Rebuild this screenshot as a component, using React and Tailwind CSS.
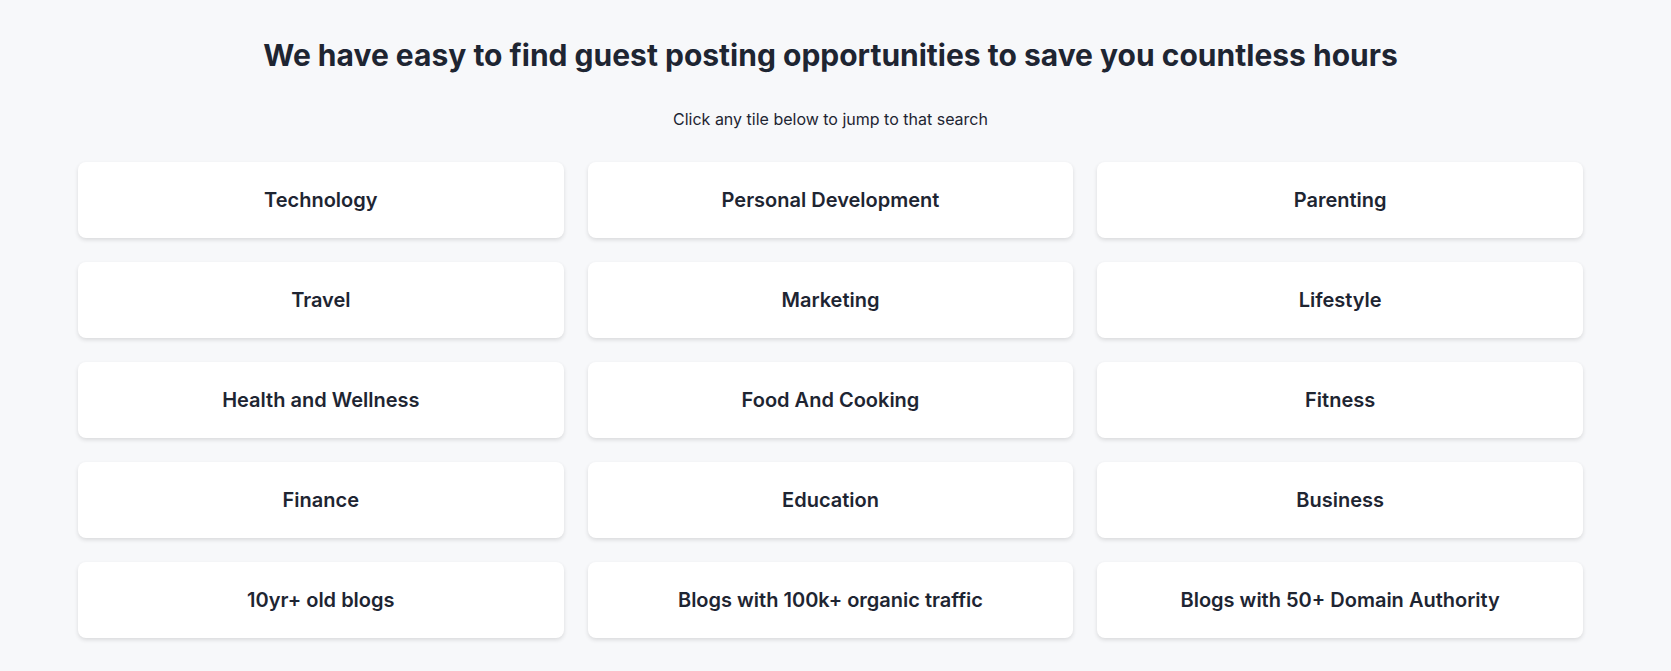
import React from "react";

const tiles = [
  "Technology",
  "Personal Development",
  "Parenting",
  "Travel",
  "Marketing",
  "Lifestyle",
  "Health and Wellness",
  "Food And Cooking",
  "Fitness",
  "Finance",
  "Education",
  "Business",
  "10yr+ old blogs",
  "Blogs with 100k+ organic traffic",
  "Blogs with 50+ Domain Authority",
];

function App() {
  return (
    <div
      className="min-h-screen w-full bg-[#f7f8fa] text-[#1e2532]"
      style={{ fontFamily: "Inter, 'Noto Sans', sans-serif" }}
    >
      <div className="pl-[78px] pr-[88px] pt-[36px] pb-10">
        <h1 className="text-center text-[30px] font-bold leading-[38px]">
          We have easy to find guest posting opportunities to save you countless hours
        </h1>
        <p className="mt-[33px] text-center text-[16px] leading-6">
          Click any tile below to jump to that search
        </p>

        <div className="mt-[31px] grid grid-cols-3 gap-x-[24px] gap-y-[24px]">
          {tiles.map((t) => (
            <button
              key={t}
              className="h-[76px] rounded-lg bg-white flex items-center justify-center text-[20px] font-semibold shadow-[0_2px_4px_rgba(0,0,0,0.12)] cursor-pointer"
            >
              {t}
            </button>
          ))}
        </div>
      </div>
    </div>
  );
}

export default App;
